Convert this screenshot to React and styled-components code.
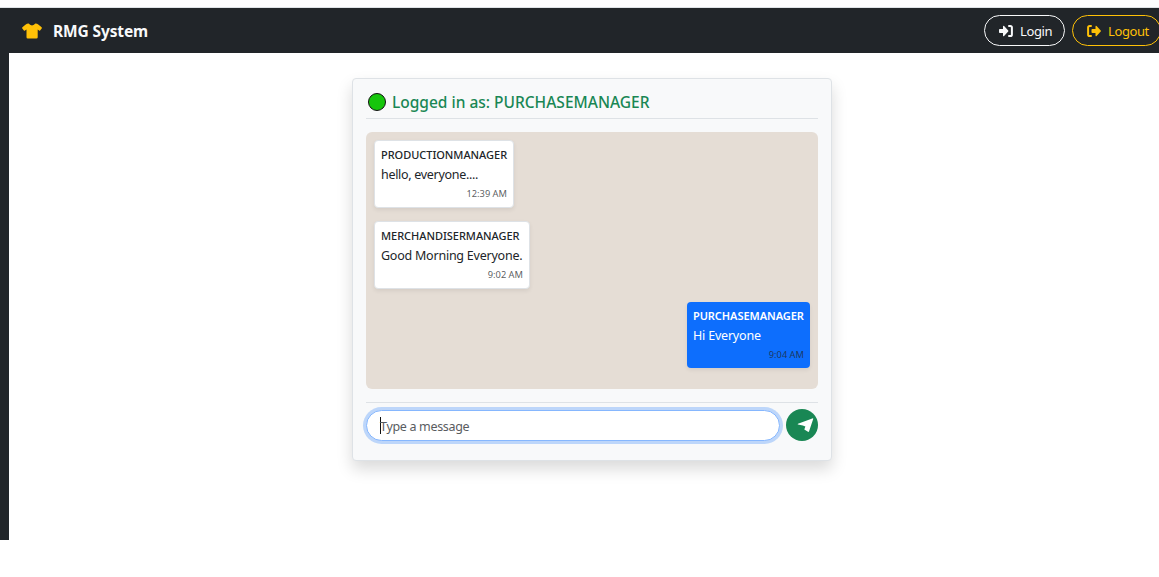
import React from "react";
import styled, { createGlobalStyle } from "styled-components";

const Global = createGlobalStyle`
  * { box-sizing: border-box; }
  body { margin: 0; background: #fff; color: #212529; overflow: hidden;
    font-family: "Segoe UI", "Noto Sans", "Open Sans", sans-serif; }
`;
const Page = styled.div`
  height: 577px; display: flex; flex-direction: column; overflow: hidden;
`;
const TopStrip = styled.div`
  height: 8px; flex: none; background: #fdfdfe; border-bottom: 1px solid #dee2e6;
`;
const Navbar = styled.header`
  height: 45px; flex: none; display: flex; align-items: center; justify-content: space-between;
  background: #212529; padding-left: 22px;
`;
const Brand = styled.div`
  display: flex; align-items: center; gap: 11px; color: #f8f9fa;
  font-size: 15.5px; font-weight: 700; line-height: 20px;
  svg { color: #ffc107; width: 20px; height: 16px; }
`;
const BrandName = styled.span`letter-spacing: -0.12px;`;
const NavActions = styled.div`
  display: flex; gap: 7px; flex: none; margin-right: -2px;
`;
const PillButton = styled.button`
  width: ${(p) => p.$width}px; height: 31px; padding: 0 0 0 14px; border-radius: 16px;
  display: flex; align-items: center; gap: 7px;
  border: 1px solid ${(p) => p.$color}; color: ${(p) => p.$color}; background: transparent;
  font: 400 13px/20px "Noto Sans", sans-serif; letter-spacing: -0.4px;
  svg { width: 14px; height: 14px; flex: none; }
`;
const Body = styled.div`display: flex; height: 487px; flex: none;`;
const Sidebar = styled.aside`width: 9px; flex: none; background: #212529;`;
const Main = styled.main`flex: 1; padding: 25px 0 0 343px;`;
const Card = styled.section`
  width: 480px; height: 383px; padding: 13px 13px 0; display: flex; flex-direction: column;
  background: #f8f9fa; border: 1px solid #dee2e6; border-radius: 4px;
  box-shadow: 0 8px 16px rgba(0, 0, 0, 0.15);
`;
const CardHeader = styled.div`
  height: 27px; flex: none; display: flex; align-items: center; gap: 6px; padding: 0 0 6px 2px;
  border-bottom: 1px solid #dee2e6; color: #198754;
  font-size: 15.5px; font-weight: 500; line-height: 20px;
`;
const StatusDot = styled.span`
  width: 18px; height: 18px; border-radius: 50%; background: #16c60c; border: 1.5px solid #111;
`;
const Messages = styled.div`
  height: 257px; flex: none; margin-top: 13px; padding: 8px; background: #e5ddd5; border-radius: 6px;
  display: flex; flex-direction: column; align-items: flex-start; gap: 13px;
`;
const Bubble = styled.article`
  width: ${(p) => p.$width}px; height: ${(p) => (p.$own ? 66 : 68)}px;
  align-self: ${(p) => (p.$own ? "flex-end" : "flex-start")};
  padding: 4px 6px;
  display: flex; flex-direction: column; white-space: nowrap;
  border: ${(p) => (p.$own ? "0" : "1px solid #dee2e6")}; border-radius: 4px;
  background: ${(p) => (p.$own ? "#0d6efd" : "#fff")};
  color: ${(p) => (p.$own ? "#fff" : "#212529")};
  box-shadow: 0 2px 4px rgba(0, 0, 0, 0.075);
`;
const Sender = styled.div`
  font-size: 11px; line-height: 19px; font-weight: ${(p) => (p.$own ? 600 : 500)};
  letter-spacing: ${(p) => (p.$own ? -0.06 : -0.03)}px;
`;
const MessageText = styled.div`
  margin-top: 1px; font-size: 12.5px; line-height: 19px; letter-spacing: ${(p) => p.$spacing}px;
`;
const Time = styled.time`
  font-size: 9.3px; line-height: 19px; align-self: flex-end;
  color: rgba(33, 37, 41, 0.75);
`;
const Composer = styled.div`
  margin-top: 13px; padding-top: 6px; border-top: 1px solid #dee2e6;
  display: flex; gap: 6px;
`;
const Field = styled.div`
  width: 414px; height: 31px; margin-top: 1px; padding-left: 13px; border: 1px solid #86b7fe; border-radius: 16px;
  display: flex; align-items: center; background: #fff; color: #595c5f; font-size: 12.5px;
  box-shadow: 0 0 0 3px rgba(13, 110, 253, 0.25);
`;
const Caret = styled.span`width: 1px; height: 17px; margin-right: -1px; background: #111;`;
const Placeholder = styled.span`letter-spacing: -0.32px; line-height: 20px; padding-top: 2px;`;
const SendButton = styled.button`
  width: 32px; height: 32px; border: 0; padding: 0 0 0 6px; border-radius: 50%; background: #198754; color: #fff;
  display: flex; align-items: center; justify-content: center;
  svg { width: 17px; height: 16px; }
`;

function ShirtIcon() {
  return (
    <svg viewBox="0 0 20 16" fill="currentColor" aria-hidden="true">
      <path d="M6.7.6Q7.8 2.4 10 2.4T13.3.6Q15.2.7 16.6 1.7L19.6 4.3Q20.1 4.8 19.7 5.4L18.1 7.4Q17.7 7.9 17.1 7.5L15.7 6.5V14.2Q15.7 15.5 14.4 15.5H5.8Q4.5 15.5 4.5 14.2V6.5L3 7.5Q2.4 7.9 1.9 7.4L.3 5.4Q-.1 4.8.4 4.3L3.4 1.7Q4.8.7 6.7.6Z" />
    </svg>
  );
}
function LoginIcon() {
  return (
    <svg viewBox="0 0 14 14" aria-hidden="true">
      <path fill="currentColor" d="M.8 4.9H4V2.7Q4 1.2 5.1 2.1L9.2 6.4Q9.7 7 9.2 7.6L5.1 11.9Q4 12.8 4 11.3V9.1H.8Q0 9.1 0 8.3V5.7Q0 4.9.8 4.9Z" />
      <path fill="none" stroke="currentColor" strokeWidth="2" strokeLinecap="round" d="M10 2H11.3Q12.9 2 12.9 3.6V10.4Q12.9 12 11.3 12H10" />
    </svg>
  );
}
function LogoutIcon() {
  return (
    <svg viewBox="0 0 14 14" aria-hidden="true">
      <path fill="currentColor" d="M5.3 4.9H8.5V2.7Q8.5 1.2 9.6 2.1L13.7 6.4Q14.2 7 13.7 7.6L9.6 11.9Q8.5 12.8 8.5 11.3V9.1H5.3Q4.5 9.1 4.5 8.3V5.7Q4.5 4.9 5.3 4.9Z" />
      <path fill="none" stroke="currentColor" strokeWidth="2" strokeLinecap="round" d="M4 2H2.7Q1.1 2 1.1 3.6V10.4Q1.1 12 2.7 12H4" />
    </svg>
  );
}
function SendIcon() {
  return (
    <svg viewBox="0 0 17 16" fill="currentColor" aria-hidden="true">
      <path d="M15.9 1.2Q16.4 1.3 16.2 2L12 14.5Q11.7 15.2 11 14.8L7.3 12.6 8.4 9.4 5.8 8.6 1 7.6Q.3 7.2 1 6.7Z" />
    </svg>
  );
}

const messages = [
  { sender: "PRODUCTIONMANAGER", text: "hello, everyone....", time: "12:39 AM", width: 140, spacing: -0.3 },
  { sender: "MERCHANDISERMANAGER", text: "Good Morning Everyone.", time: "9:02 AM", width: 156, spacing: -0.23 },
  { sender: "PURCHASEMANAGER", text: "Hi Everyone", time: "9:04 AM", width: 123, spacing: -0.2, own: true },
];

export default function App() {
  return (
    <Page>
      <Global />
      <TopStrip />
      <Navbar>
        <Brand><ShirtIcon /><BrandName>RMG System</BrandName></Brand>
        <NavActions>
          <PillButton $width={81} $color="#f8f9fa"><LoginIcon />Login</PillButton>
          <PillButton $width={89} $color="#ffc107"><LogoutIcon />Logout</PillButton>
        </NavActions>
      </Navbar>
      <Body>
        <Sidebar />
        <Main>
          <Card>
            <CardHeader><StatusDot /><span>Logged in as: PURCHASEMANAGER</span></CardHeader>
            <Messages>
              {messages.map((m) => (
                <Bubble key={m.sender} $width={m.width} $own={m.own}>
                  <Sender $own={m.own}>{m.sender}</Sender>
                  <MessageText $spacing={m.spacing}>{m.text}</MessageText>
                  <Time>{m.time}</Time>
                </Bubble>
              ))}
            </Messages>
            <Composer>
              <Field><Caret /><Placeholder>Type a message</Placeholder></Field>
              <SendButton aria-label="Send"><SendIcon /></SendButton>
            </Composer>
          </Card>
        </Main>
      </Body>
    </Page>
  );
}
